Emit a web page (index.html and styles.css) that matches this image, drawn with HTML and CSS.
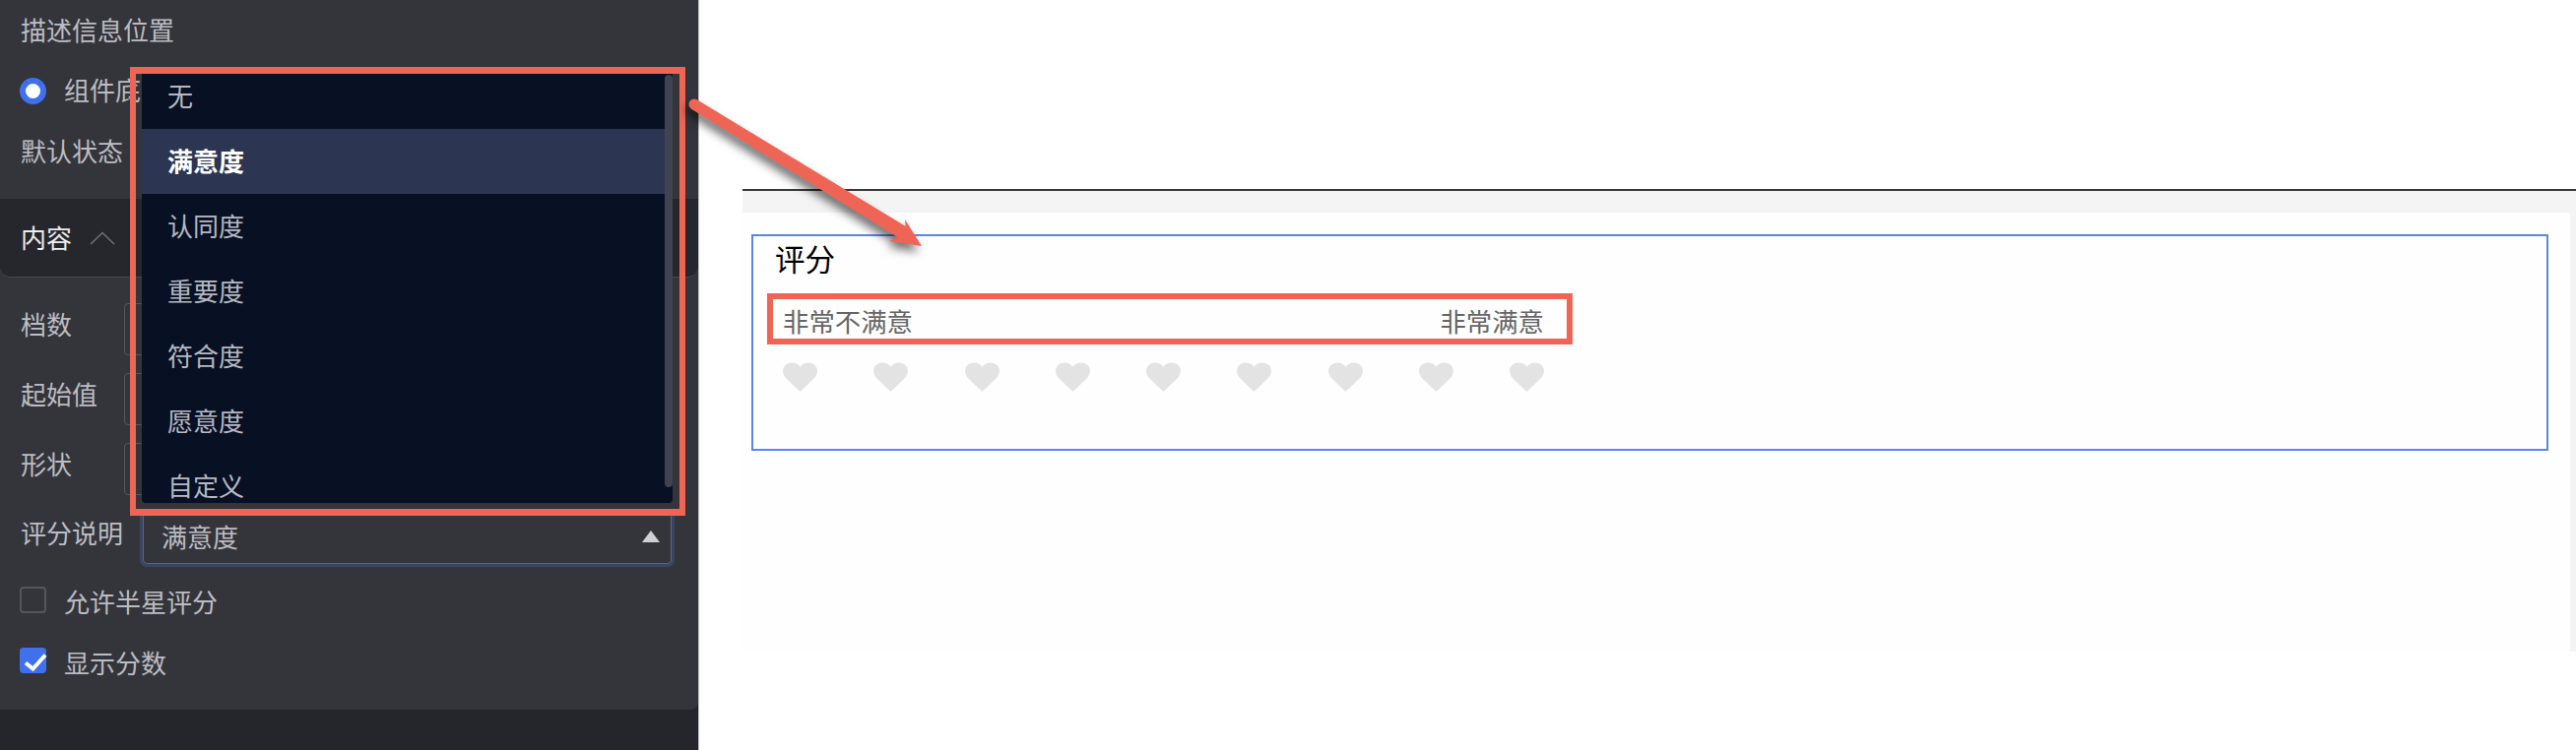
FILE: index.html
```html
<!DOCTYPE html>
<html lang="zh-CN">
<head>
<meta charset="utf-8">
<title>评分</title>
<link rel="stylesheet" href="styles.css">
</head>
<body>
<div class="page">
  <aside class="sidebar">
    <div class="panel">
      <div class="top-group">
        <div class="line line-title">描述信息位置</div>
        <div class="line line-radio"><span class="radio"></span><span class="opt">组件底部</span></div>
        <div class="line line-state">默认状态</div>
      </div>
      <div class="section-head">
        <span class="section-name">内容</span>
        <svg class="chevron" viewBox="0 0 26 14"><polyline points="1,13 13,1.5 25,13"/></svg>
      </div>
      <div class="form">
        <div class="field"><label class="label">档数</label><div class="input"></div></div>
        <div class="field"><label class="label">起始值</label><div class="input"></div></div>
        <div class="field"><label class="label">形状</label><div class="input"></div></div>
        <div class="field field-select"><label class="label">评分说明</label>
          <div class="select"><span class="select-value">满意度</span><i class="caret"></i></div>
        </div>
      </div>
      <div class="check-row check-first"><span class="box"></span><span class="opt">允许半星评分</span></div>
      <div class="check-row check-second">
        <span class="box box-on"><svg viewBox="0 0 27 26"><polyline points="6,15.5 13.5,21.5 26,7.5"/></svg></span>
        <span class="opt">显示分数</span>
      </div>
    </div>

    <div class="menu">
      <ul class="menu-list">
        <li>无</li>
        <li class="active">满意度</li>
        <li>认同度</li>
        <li>重要度</li>
        <li>符合度</li>
        <li>愿意度</li>
        <li>自定义</li>
      </ul>
      <span class="thumb"></span>
    </div>
    <div class="mark mark-menu"></div>
  </aside>

  <main class="main">
    <div class="rule"></div>
    <div class="stage">
      <div class="card">
        <section class="rating">
          <h2 class="rating-title">评分</h2>
          <div class="scale">
            <div class="scale-labels"><span>非常不满意</span><span>非常满意</span></div>
            <div class="mark mark-scale"></div>
            <div class="hearts">
              <svg class="heart" viewBox="0 0 35 30"><use href="#heart"/></svg>
              <svg class="heart" viewBox="0 0 35 30"><use href="#heart"/></svg>
              <svg class="heart" viewBox="0 0 35 30"><use href="#heart"/></svg>
              <svg class="heart" viewBox="0 0 35 30"><use href="#heart"/></svg>
              <svg class="heart" viewBox="0 0 35 30"><use href="#heart"/></svg>
              <svg class="heart" viewBox="0 0 35 30"><use href="#heart"/></svg>
              <svg class="heart" viewBox="0 0 35 30"><use href="#heart"/></svg>
              <svg class="heart" viewBox="0 0 35 30"><use href="#heart"/></svg>
              <svg class="heart" viewBox="0 0 35 30"><use href="#heart"/></svg>
            </div>
          </div>
        </section>
      </div>
    </div>
  </main>

  <svg class="arrow" viewBox="690 90 260 175">
    <g>
      <circle cx="705" cy="106" r="5.5"/>
      <polygon points="707.9,101.3 924,232.5 917,244.5 702.1,110.7"/>
      <polygon points="919,223 936,250 903,245 920,238"/>
    </g>
  </svg>
</div>
<svg class="defs" width="0" height="0">
  <defs>
    <path id="heart" d="M17.5 30 L3.2 16.2 C-1.2 11.8 -0.8 5.2 3.4 2.2 C8 -1 14.6 0.2 17.5 4.6 C20.4 0.2 27 -1 31.6 2.2 C35.8 5.2 36.2 11.8 31.8 16.2 Z"/>
  </defs>
</svg>
</body>
</html>
```

FILE: styles.css
```css
* { box-sizing: border-box; }
html, body { margin: 0; padding: 0; height: 100%; }
body {
  background: #fff;
  font-family: "Noto Sans CJK SC", "Noto Sans", sans-serif;
  overflow: hidden;
}
.page { position: relative; display: flex; width: 2616px; height: 762px; overflow: hidden; }

/* sidebar */
.sidebar {
  position: relative;
  flex: 0 0 710px;
  height: 762px;
  background: #25262b;
  border-right: 1px solid #b9b9bb;
  color: #bcbdc2;
  font-size: 26px;
}
.panel {
  height: 721px;
  background: #34353b;
  border-radius: 0 0 8px 0;
}
.top-group { height: 202px; padding-left: 21px; }
.line { display: flex; align-items: center; white-space: nowrap; }
.line-title { height: 62px; padding-bottom: 4px; }
.line-radio { height: 61px; gap: 18px; }
.line-radio .opt { margin-bottom: 3px; }
.line-state { height: 62px; padding-bottom: 3px; }
.radio {
  flex: 0 0 27px;
  height: 27px;
  border-radius: 50%;
  background: #fff;
  border: 6px solid #4070ec;
  margin-left: -1px;
}
.section-head {
  display: flex;
  align-items: center;
  gap: 18px;
  height: 80px;
  padding: 0 0 0 21px;
  background: #26272c;
  border-bottom: 1px solid #47484d;
  border-radius: 0 0 10px 10px;
  color: #ececec;
}
.section-name { margin-bottom: 2px; }
.chevron { width: 26px; height: 14px; fill: none; stroke: #6f7075; stroke-width: 1.6; }

.form {
  display: flex;
  flex-direction: column;
  gap: 18px;
  padding: 26px 27px 0 21px;
}
.field { display: flex; height: 53px; }
.label { flex: 0 0 105px; line-height: 41px; }
.input { flex: 1; height: 53px; border: 1px solid #55565c; border-radius: 4px; }
.field-select .label { flex-basis: 124px; line-height: 39px; }
.select {
  flex: 1;
  height: 52px;
  display: flex;
  align-items: center;
  justify-content: space-between;
  padding: 0 11px 0 18px;
  border: 1.5px solid #63656c;
  border-radius: 4px;
  box-shadow: 0 0 0 3px #3a4566;
}
.select-value { margin-bottom: 5px; }
.caret {
  width: 0; height: 0;
  margin-bottom: 4px;
  border-left: 9px solid transparent;
  border-right: 9px solid transparent;
  border-bottom: 12px solid #cfd0d3;
}
.check-row { display: flex; align-items: flex-start; padding-left: 20px; gap: 18px; }
.check-first { margin-top: 22px; height: 27px; }
.check-second { margin-top: 35px; height: 26px; }
.opt { line-height: 34px; white-space: nowrap; }
.check-first .opt { line-height: 30px; }
.check-second .opt { line-height: 30px; }
.box {
  flex: 0 0 27px;
  height: 27px;
  border: 2px solid #55565c;
  border-radius: 4px;
}
.box-on { height: 26px; border: 0; background: #4070ec; overflow: visible; }
.box-on svg { display: block; width: 27px; height: 26px; fill: none; stroke: #fff; stroke-width: 4; overflow: visible; }

/* dropdown */
.menu {
  position: absolute;
  left: 144px;
  top: 74px;
  width: 539px;
  height: 437px;
  background: #081023;
  border-radius: 0 0 4px 4px;
  overflow: hidden;
  z-index: 2;
}
.menu-list { list-style: none; margin: -9px 8px 0 0; padding: 0; }
.menu-list li { height: 66px; line-height: 64px; padding-left: 26px; color: #b6b9c2; }
.menu-list .active { background: #2c3552; color: #fff; font-weight: 700; }
.thumb {
  position: absolute;
  right: 0;
  top: 2px;
  width: 8px;
  height: 419px;
  border-radius: 4px;
  background: #414350;
}

/* annotation frames */
.mark { position: absolute; border: 7px solid #ef6555; border-left-width: 6px; border-right-width: 6px; z-index: 3; }
.mark-menu { left: 132px; top: 68px; width: 564px; height: 456px; }
.mark-scale { left: -16px; top: -10px; width: 818px; height: 52px; border-width: 6px; }

/* main */
.main { flex: 1; padding-top: 192px; display: flex; flex-direction: column; min-width: 0; }
.rule { margin-left: 44px; height: 2px; background: #383838; flex: none; }
.stage {
  margin-left: 44px;
  height: 468px;
  padding: 22px 6px 0 0;
  background: #f4f4f4;
}
.card { height: 100%; padding: 22px 22px 0 9px; background: #fefefe; border-radius: 4px 4px 0 0; }
.rating { height: 220px; border: 2px solid #5b86e5; padding: 0 0 0 22px; color: #000; }
.rating-title { margin: 0; font-size: 30.5px; font-weight: 400; line-height: 44px; }
.scale { position: relative; width: 773px; margin: 24px 0 0 8px; }
.scale-labels { display: flex; justify-content: space-between; font-size: 26.4px; line-height: 36px; color: #666; }
.hearts { display: flex; justify-content: space-between; margin-top: 24px; }
.heart { width: 35px; height: 30px; fill: #e3e3e3; display: block; }

/* arrow */
.arrow {
  position: absolute;
  left: 690px;
  top: 90px;
  width: 260px;
  height: 175px;
  overflow: visible;
  z-index: 4;
  fill: #ef6555;
  filter: drop-shadow(-3px 6px 5px rgba(0, 0, 0, .55));
}
.defs { position: absolute; }
```
